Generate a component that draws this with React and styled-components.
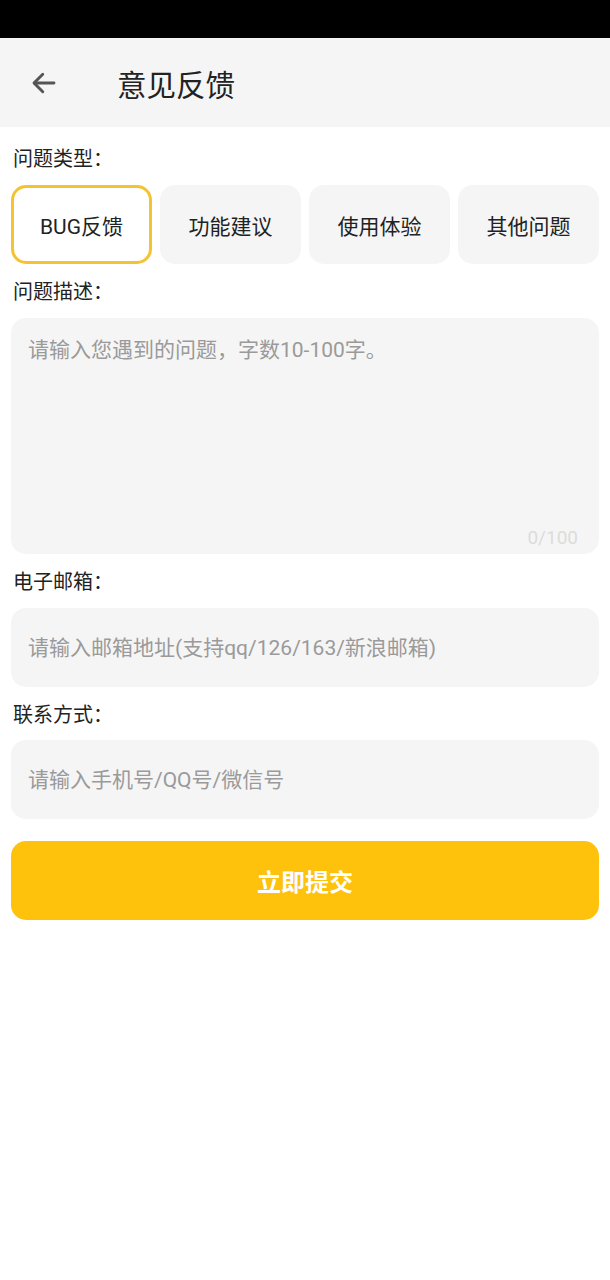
import React, { useState } from "react";
import styled, { createGlobalStyle } from "styled-components";

const GlobalStyle = createGlobalStyle`
  html, body {
    margin: 0;
    padding: 0;
    background: #ffffff;
    font-family: Roboto, "Noto Sans CJK SC", sans-serif;
  }
  * {
    box-sizing: border-box;
  }
`;

const Page = styled.div`
  width: 610px;
  min-height: 1280px;
  background: #ffffff;
`;

const StatusBar = styled.div`
  height: 38px;
  background: #000000;
`;

const Header = styled.div`
  height: 89px;
  background: #f5f5f5;
  display: flex;
  align-items: center;
  padding-left: 28px;
`;

const BackButton = styled.div`
  width: 32px;
  height: 32px;
  display: flex;
  align-items: center;
  justify-content: center;
`;

const Title = styled.div`
  margin-left: 57px;
  font-size: 29.5px;
  color: #222222;
  font-family: "Noto Sans CJK SC", sans-serif;
`;

const Form = styled.div`
  padding: 0 11px;
  display: flex;
  flex-direction: column;
`;

const Label = styled.div`
  font-size: 20px;
  color: #222222;
  padding-left: 2px;
  height: 26px;
  line-height: 26px;
  margin-top: ${(p) => p.top}px;
  margin-bottom: ${(p) => p.bottom}px;
`;

const ChipRow = styled.div`
  display: grid;
  grid-template-columns: repeat(4, 1fr);
  gap: 8px;
`;

const Chip = styled.div`
  height: 79px;
  border-radius: 15px;
  display: flex;
  align-items: center;
  justify-content: center;
  font-size: 21px;
  color: #222222;
  background: ${(p) => (p.active ? "#ffffff" : "#f5f5f5")};
  border: 3px solid ${(p) => (p.active ? "#f5c330" : "#f5f5f5")};
  cursor: pointer;
`;

const TextBox = styled.div`
  position: relative;
  height: 236px;
  background: #f5f5f5;
  border-radius: 15px;
  padding: 18px 17px;
`;

const Placeholder = styled.div`
  font-size: 21px;
  color: #9a9a9a;
  line-height: 28px;
`;

const Counter = styled.div`
  position: absolute;
  right: 21px;
  bottom: 5px;
  font-size: 19px;
  color: #dcdcdc;
`;

const InputBox = styled.div`
  height: 79px;
  background: #f5f5f5;
  border-radius: 15px;
  display: flex;
  align-items: center;
  padding-left: 17px;
`;

const SubmitButton = styled.div`
  margin-top: 22px;
  height: 79px;
  border-radius: 15px;
  background: #fec20c;
  color: #ffffff;
  font-size: 24px;
  font-weight: bold;
  font-family: "Noto Sans CJK SC", sans-serif;
  display: flex;
  align-items: center;
  justify-content: center;
`;

const types = ["BUG反馈", "功能建议", "使用体验", "其他问题"];

export default function App() {
  const [active, setActive] = useState(0);
  return (
    <Page>
      <GlobalStyle />
      <StatusBar />
      <Header>
        <BackButton>
          <svg width="30" height="30" viewBox="0 0 24 24" fill="none" stroke="#555555" strokeWidth="2.3" strokeLinecap="round" strokeLinejoin="round">
            <path d="M20 12H4.5" />
            <path d="M11 5l-7 7 7 7" />
          </svg>
        </BackButton>
        <Title>意见反馈</Title>
      </Header>
      <Form>
        <Label top={19} bottom={13}>问题类型：</Label>
        <ChipRow>
          {types.map((t, i) => (
            <Chip key={t} active={i === active} onClick={() => setActive(i)}>
              {t}
            </Chip>
          ))}
        </ChipRow>
        <Label top={15} bottom={13}>问题描述：</Label>
        <TextBox>
          <Placeholder>请输入您遇到的问题，字数10-100字。</Placeholder>
          <Counter>0/100</Counter>
        </TextBox>
        <Label top={15} bottom={13}>电子邮箱：</Label>
        <InputBox>
          <Placeholder>请输入邮箱地址(支持qq/126/163/新浪邮箱)</Placeholder>
        </InputBox>
        <Label top={15} bottom={12}>联系方式：</Label>
        <InputBox>
          <Placeholder>请输入手机号/QQ号/微信号</Placeholder>
        </InputBox>
        <SubmitButton>立即提交</SubmitButton>
      </Form>
    </Page>
  );
}
